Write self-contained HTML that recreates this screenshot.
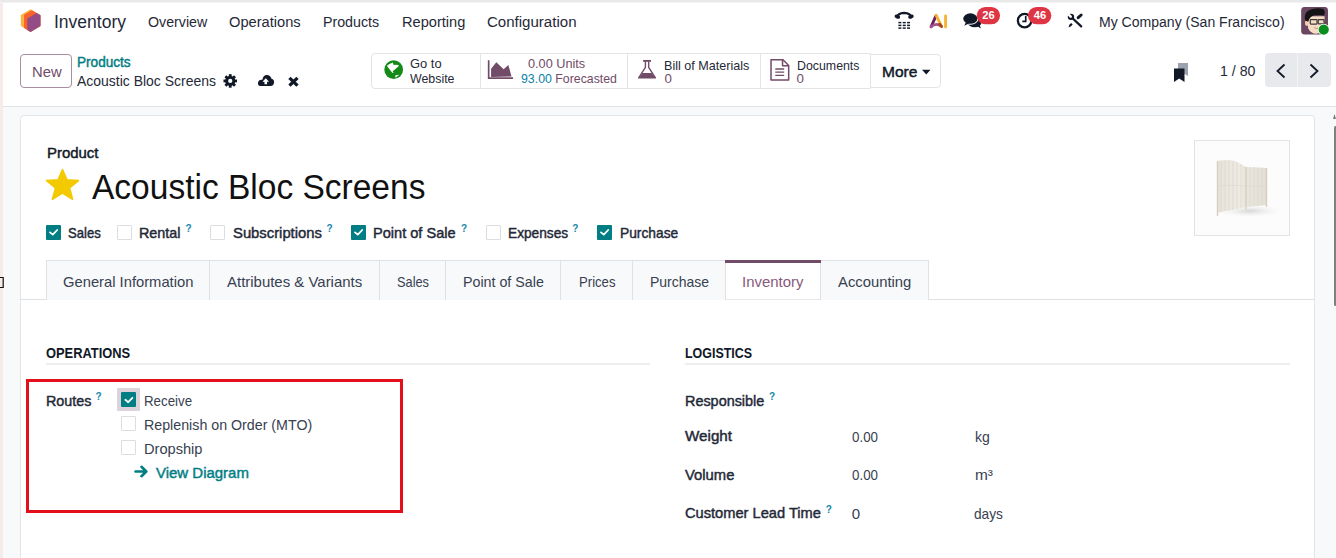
<!DOCTYPE html><html><head><meta charset="utf-8"><style>
html,body{margin:0;padding:0;}
body{width:1336px;height:558px;overflow:hidden;position:relative;background:#fff;font-family:"Liberation Sans",sans-serif;}
.t{position:absolute;white-space:nowrap;transform-origin:0 0;}
</style></head><body>
<div style="position:absolute;left:0px;top:0px;width:1336px;height:2px;background:#e9e9e9"></div>
<div style="position:absolute;left:0px;top:2px;width:1336px;height:1px;background:#f3f3f3"></div>
<div style="position:absolute;left:0px;top:3px;width:3px;height:555px;background:#f5ecea"></div>
<div style="position:absolute;left:3px;top:106px;width:1333px;height:1px;background:#e3e4e6"></div>
<div style="position:absolute;left:3px;top:107px;width:1333px;height:451px;background:#f8f9fa"></div>
<div style="position:absolute;left:20px;top:115px;width:1293px;height:460px;background:#fff;border:1px solid #e3e5e8;border-radius:4px"></div>
<svg style="position:absolute;left:1332px;top:112px" width="4" height="196" viewBox="0 0 4 196"><path d="M2.5 2 L4 7 L1 7 Z" fill="#7a7a7a"/><rect x="2" y="14" width="4" height="180" rx="1.5" fill="#808080"/></svg>
<svg style="position:absolute;left:0px;top:277px" width="4" height="11" viewBox="0 0 4 11"><path d="M0 0.5 H3.2 V10.5 H0" fill="none" stroke="#111" stroke-width="1.2"/></svg>
<svg style="position:absolute;left:16px;top:5px" width="30" height="30" viewBox="0 0 558 558"><polygon points="270,80 455,190 455,390 270,500 90,390 90,185" fill="#f9b53f"/><polygon points="297,96 455,190 455,390 270,500 150,427 150,180" fill="#f9622a"/><polygon points="385,148 455,190 455,390 270,500 210,463 210,250" fill="#934c86"/></svg>
<div class="t" style="left:54.0px;top:13px;font-size:18px;line-height:18px;color:#1f2937;transform:scaleX(0.9725);">Inventory</div>
<div class="t" style="left:147.6px;top:14px;font-size:15.5px;line-height:15.5px;color:#1f2937;transform:scaleX(0.9165);">Overview</div>
<div class="t" style="left:228.8px;top:14px;font-size:15.5px;line-height:15.5px;color:#1f2937;transform:scaleX(0.9457);">Operations</div>
<div class="t" style="left:323.2px;top:14px;font-size:15.5px;line-height:15.5px;color:#1f2937;transform:scaleX(0.9171);">Products</div>
<div class="t" style="left:401.7px;top:14px;font-size:15.5px;line-height:15.5px;color:#1f2937;transform:scaleX(0.9419);">Reporting</div>
<div class="t" style="left:487.1px;top:14px;font-size:15.5px;line-height:15.5px;color:#1f2937;transform:scaleX(0.9707);">Configuration</div>
<svg style="position:absolute;left:890px;top:8px" width="65" height="26" viewBox="0 0 1336 534"><path d="M150 180 Q160 110 290 100 Q420 110 430 180" fill="none" stroke="#111827" stroke-width="48"/><ellipse cx="150" cy="178" rx="58" ry="40" fill="#111827" transform="rotate(20 150 178)"/><ellipse cx="432" cy="178" rx="58" ry="40" fill="#111827" transform="rotate(-20 432 178)"/><g fill="#111827"><rect x="172" y="285" width="62" height="30"/><rect x="262" y="285" width="62" height="30"/><rect x="350" y="285" width="62" height="30"/><rect x="172" y="342" width="62" height="30"/><rect x="262" y="342" width="62" height="30"/><rect x="350" y="342" width="62" height="30"/><rect x="172" y="398" width="62" height="30"/><rect x="262" y="398" width="62" height="30"/><rect x="350" y="398" width="62" height="30"/></g><path d="M845 385 L945 160" stroke="#6b1f5f" stroke-width="60" stroke-linecap="round" fill="none"/><path d="M845 385 Q950 290 1060 380" stroke="#a0508f" stroke-width="55" stroke-linecap="round" fill="none"/><path d="M950 150 L1060 380" stroke="#f8b133" stroke-width="60" stroke-linecap="round" fill="none"/><path d="M1020 330 L1060 380" stroke="#a8401e" stroke-width="55" stroke-linecap="round" fill="none"/><path d="M1142 160 L1142 390" stroke="#f8b133" stroke-width="58" stroke-linecap="round" fill="none"/></svg>
<svg style="position:absolute;left:955px;top:4px" width="100" height="30" viewBox="0 0 1336 401"><ellipse cx="262" cy="250" rx="90" ry="62" fill="#111827"/><path d="M290 290 L345 328 L325 265 Z" fill="#111827"/><ellipse cx="205" cy="195" rx="108" ry="83" fill="#fff"/><ellipse cx="205" cy="195" rx="95" ry="70" fill="#111827"/><path d="M150 238 L122 292 L200 255 Z" fill="#111827"/><circle cx="930" cy="222" r="90" fill="none" stroke="#111827" stroke-width="30"/><path d="M945 160 V232 H900" fill="none" stroke="#111827" stroke-width="22"/><rect x="290" y="40" width="312" height="230" rx="115" fill="#df3443"/><rect x="975" y="40" width="312" height="230" rx="115" fill="#df3443"/></svg>
<div class="t" style="left:982.3px;top:10px;font-size:11.2px;line-height:11.2px;color:#fff;font-weight:bold;">26</div>
<div class="t" style="left:1033.8px;top:10px;font-size:11.2px;line-height:11.2px;color:#fff;font-weight:bold;">46</div>
<svg style="position:absolute;left:1060px;top:8px" width="30" height="26" viewBox="0 0 644 558"><path d="M275 225 L455 395" stroke="#111827" stroke-width="48" stroke-linecap="round"/><circle cx="235" cy="190" r="68" fill="#111827"/><path d="M235 190 L160 115" stroke="#fff" stroke-width="52"/><circle cx="235" cy="190" r="22" fill="#fff"/><path d="M182 418 L200 360 L240 322 L272 352 L236 392 Z" fill="#111827"/><path d="M390 208 L455 150" stroke="#111827" stroke-width="62" stroke-linecap="round"/></svg>
<div class="t" style="left:1099.2px;top:14px;font-size:15.5px;line-height:15.5px;color:#1f2937;transform:scaleX(0.9053);">My Company (San Francisco)</div>
<svg style="position:absolute;left:1296px;top:4px" width="38" height="34" viewBox="0 0 624 558"><rect x="85" y="50" width="440" height="450" rx="55" fill="#6a4661"/><path d="M200 200 Q190 330 200 400 Q240 490 330 490 Q420 480 460 400 L470 200 Z" fill="#f7dcc4"/><ellipse cx="180" cy="310" rx="32" ry="48" fill="#f2cfb4"/><path d="M150 270 Q120 150 220 100 Q330 50 450 80 Q490 120 460 190 Q420 170 300 185 Q230 200 200 290 Z" fill="#151515"/><rect x="235" y="255" width="110" height="75" rx="8" fill="none" stroke="#3d3d3d" stroke-width="20"/><rect x="365" y="255" width="95" height="70" rx="8" fill="none" stroke="#3d3d3d" stroke-width="20"/><path d="M300 390 Q340 410 380 395" fill="none" stroke="#a86a5a" stroke-width="12"/><circle cx="455" cy="420" r="97" fill="#fff"/><circle cx="455" cy="420" r="84" fill="#0a8f1e"/></svg>
<div style="position:absolute;left:20px;top:54px;width:50px;height:32px;border:1px solid #a98ea2;border-radius:4px;background:#fff"></div>
<div class="t" style="left:31.6px;top:64px;font-size:15px;line-height:15px;color:#714b67;transform:scaleX(0.9898);">New</div>
<div class="t" style="left:77.4px;top:55px;font-size:14px;line-height:14px;color:#017e84;-webkit-text-stroke:0.45px #017e84;transform:scaleX(0.9702);">Products</div>
<div class="t" style="left:77.0px;top:73px;font-size:15px;line-height:15px;color:#1f2937;transform:scaleX(0.9314);">Acoustic Bloc Screens</div>
<svg style="position:absolute;left:218px;top:66px" width="86" height="28" viewBox="0 0 1336 435"><g transform="translate(190 232)" fill="#111827"><rect x="-22" y="-105" width="44" height="60" transform="rotate(0)"/><rect x="-22" y="-105" width="44" height="60" transform="rotate(45)"/><rect x="-22" y="-105" width="44" height="60" transform="rotate(90)"/><rect x="-22" y="-105" width="44" height="60" transform="rotate(135)"/><rect x="-22" y="-105" width="44" height="60" transform="rotate(180)"/><rect x="-22" y="-105" width="44" height="60" transform="rotate(225)"/><rect x="-22" y="-105" width="44" height="60" transform="rotate(270)"/><rect x="-22" y="-105" width="44" height="60" transform="rotate(315)"/><circle r="78"/></g><circle cx="190" cy="232" r="33" fill="#fff"/><path d="M650 310 Q610 300 625 245 Q640 205 690 215 Q700 140 760 140 Q820 145 830 200 Q880 215 870 265 Q860 310 820 310 Z" fill="#111827"/><path d="M742 190 L690 245 H722 V285 H762 V245 H794 Z" fill="#fff"/><path d="M1110 185 L1235 305 M1235 185 L1110 305" stroke="#111827" stroke-width="52"/></svg>
<div style="position:absolute;left:371px;top:53px;width:498px;height:34px;border:1px solid #e2e4e7;border-radius:4px 0 0 4px;background:#fff"></div>
<div style="position:absolute;left:870px;top:54px;width:69px;height:32px;border:1px solid #e2e4e7;border-radius:0 4px 4px 0;background:#fff"></div>
<div style="position:absolute;left:480px;top:54px;width:1px;height:34px;background:#e2e4e7"></div>
<div style="position:absolute;left:627px;top:54px;width:1px;height:34px;background:#e2e4e7"></div>
<div style="position:absolute;left:760px;top:54px;width:1px;height:34px;background:#e2e4e7"></div>
<svg style="position:absolute;left:382px;top:58px" width="24" height="24" viewBox="0 0 558 558"><circle cx="272" cy="272" r="218" fill="#168a18"/><path d="M118 172 L175 140 L250 106 L262 140 L300 158 L340 155 L395 175 L380 198 L345 228 L318 252 L296 276 L262 298 L270 340 L248 350 L215 312 L175 262 L132 212 Z" fill="#fff"/><ellipse cx="292" cy="138" rx="28" ry="20" fill="#168a18"/><ellipse cx="272" cy="312" rx="20" ry="18" fill="#168a18"/><path d="M310 400 L405 392 L312 458 Z" fill="#fff"/></svg>
<svg style="position:absolute;left:380px;top:55px" width="140" height="30" viewBox="0 0 1336 286"><path d="M1037 50 V220 H1270" fill="none" stroke="#714b67" stroke-width="16"/><path d="M1060 210 V130 L1110 70 L1180 135 L1225 95 L1255 205 Z" fill="#714b67"/></svg>
<div class="t" style="left:410.4px;top:57px;font-size:13.3px;line-height:13.3px;color:#1f2937;transform:scaleX(0.9714);">Go to</div>
<div class="t" style="left:410.4px;top:72px;font-size:13.3px;line-height:13.3px;color:#1f2937;transform:scaleX(0.9309);">Website</div>
<div class="t" style="left:527.7px;top:57px;font-size:13.3px;line-height:13.3px;color:#714b67;transform:scaleX(0.9552);">0.00 Units</div>
<div class="t" style="left:520.6px;top:72px;font-size:13.3px;line-height:13.3px;color:#714b67;transform:scaleX(0.9274);"><span style="color:#0c81a5">93.00</span> Forecasted</div>
<svg style="position:absolute;left:634px;top:56px" width="26" height="26" viewBox="0 0 558 558"><path d="M195 105 H365" stroke="#714b67" stroke-width="40"/><path d="M245 120 V245 L100 468 H460 L315 245 V120" fill="none" stroke="#714b67" stroke-width="30" stroke-linejoin="round"/><path d="M183 365 H377 L455 468 H105 Z" fill="#714b67"/></svg>
<div class="t" style="left:664.4px;top:59px;font-size:13.3px;line-height:13.3px;color:#1f2937;transform:scaleX(0.9460);">Bill of Materials</div>
<div class="t" style="left:664.4px;top:72px;font-size:13.3px;line-height:13.3px;color:#714b67;">0</div>
<svg style="position:absolute;left:766px;top:56px" width="28" height="28" viewBox="0 0 558 558"><path d="M100 75 H338 L452 188 V478 H100 Z" fill="none" stroke="#714b67" stroke-width="30" stroke-linejoin="round"/><path d="M330 75 V192 H452" fill="none" stroke="#714b67" stroke-width="30" stroke-linejoin="round"/><path d="M185 258 H362 M185 322 H362 M185 386 H362" stroke="#714b67" stroke-width="28"/></svg>
<div class="t" style="left:796.6px;top:59px;font-size:13.3px;line-height:13.3px;color:#1f2937;transform:scaleX(0.9291);">Documents</div>
<div class="t" style="left:796.6px;top:72px;font-size:13.3px;line-height:13.3px;color:#714b67;">0</div>
<div class="t" style="left:881.8px;top:64px;font-size:15px;line-height:15px;color:#111827;-webkit-text-stroke:0.45px #111827;transform:scaleX(1.0329);">More</div>
<svg style="position:absolute;left:920px;top:66px" width="12" height="10" viewBox="0 0 12 10"><path d="M2 3.8 H10.5 L6.25 8.5 Z" fill="#111827"/></svg>
<svg style="position:absolute;left:1172px;top:62px" width="18" height="22" viewBox="0 0 18 22"><path d="M6 1 H16 V14 L11 11 L6 14 Z" fill="#9ca3af"/><path d="M2 6.5 H12.5 V20 L7.2 16.5 L2 20 Z" fill="#111827"/></svg>
<div class="t" style="left:1220.0px;top:63px;font-size:15px;line-height:15px;color:#1f2937;transform:scaleX(0.9459);">1 / 80</div>
<div style="position:absolute;left:1265px;top:53px;width:66px;height:34px;background:#e7e9ec;border-radius:4px"></div>
<div style="position:absolute;left:1297px;top:53px;width:1px;height:34px;background:#f3f4f6"></div>
<svg style="position:absolute;left:1265px;top:53px" width="66" height="34" viewBox="0 0 66 34"><path d="M19.5 11.5 L12.5 18 L19.5 24.5" fill="none" stroke="#111827" stroke-width="1.8"/><path d="M45.5 11.5 L52.5 18 L45.5 24.5" fill="none" stroke="#111827" stroke-width="1.8"/></svg>
<div class="t" style="left:46.5px;top:145px;font-size:15px;line-height:15px;color:#111827;-webkit-text-stroke:0.45px #111827;transform:scaleX(0.9962);">Product</div>
<svg style="position:absolute;left:44.5px;top:168px" width="36" height="34" viewBox="0 0 36 34"><path d="M17.5 1.5 L22 11.8 L33.5 12.6 L24.6 20 L27.6 31.3 L17.5 25 L7.4 31.3 L10.4 20 L1.5 12.6 L13 11.8 Z" fill="#f3c900" stroke="#f3c900" stroke-width="1.5" stroke-linejoin="round"/></svg>
<div class="t" style="left:91.8px;top:170px;font-size:35.7px;line-height:35.7px;color:#111111;transform:scaleX(0.9390);">Acoustic Bloc Screens</div>
<div style="position:absolute;left:1194px;top:140px;width:94px;height:94px;border:1px solid #e3e3e3;background:#fdfcfc"></div>
<svg style="position:absolute;left:1195px;top:141px" width="94" height="94" viewBox="0 0 94 94"><defs><linearGradient id="sg" x1="0" x2="1"><stop offset="0" stop-color="#e6e2d8"/><stop offset="0.45" stop-color="#eeebe4"/><stop offset="0.55" stop-color="#e9e6de"/><stop offset="1" stop-color="#e3dfd5"/></linearGradient><radialGradient id="sh"><stop offset="0" stop-color="#d6d6d6"/><stop offset="1" stop-color="#fdfcfc" stop-opacity="0"/></radialGradient></defs><ellipse cx="55" cy="70" rx="36" ry="7" fill="url(#sh)"/><path d="M22 20 Q32 18 40 20 Q46 23 51 26 L72 27 L72 64 L51 66 L22 72 Z" fill="url(#sg)"/><path d="M26 20 V71 M30 19.5 V70 M34 19.5 V69.5 M38 20 V69 M42 21 V68 M46 23 V67 M55 26 V65.5 M59 26 V65 M63 26.5 V65 M67 26.5 V64.5" fill="none" stroke="#dcd7cc" stroke-width="0.7"/><path d="M22 45 Q40 44 51 45 L72 45" fill="none" stroke="#dfdad0" stroke-width="0.8"/><path d="M22.5 20 V75 M51 26 V68.5 M71.5 27 V66" fill="none" stroke="#d6cfc0" stroke-width="1.4"/></svg>
<div style="position:absolute;left:46px;top:225px;width:15px;height:15px;background:#017e84;border-radius:1px"></div>
<svg style="position:absolute;left:46px;top:225px" width="15" height="15" viewBox="0 0 15 15"><path d="M4 7.4 L6.8 9.6 L11.2 5" fill="none" stroke="#fff" stroke-width="1.8" stroke-linecap="round" stroke-linejoin="round"/></svg>
<div class="t" style="left:67.7px;top:225px;font-size:15px;line-height:15px;color:#1f2937;-webkit-text-stroke:0.45px #1f2937;transform:scaleX(0.8741);">Sales</div>
<div style="position:absolute;left:117px;top:225px;width:13px;height:13px;border:1px solid #dcdde0;border-radius:1px;background:#fff"></div>
<div class="t" style="left:139.3px;top:225px;font-size:15px;line-height:15px;color:#1f2937;-webkit-text-stroke:0.45px #1f2937;transform:scaleX(0.9571);">Rental</div>
<div class="t" style="left:185.5px;top:224px;font-size:10px;line-height:10px;color:#1587aa;font-weight:bold;">?</div>
<div style="position:absolute;left:210px;top:225px;width:13px;height:13px;border:1px solid #dcdde0;border-radius:1px;background:#fff"></div>
<div class="t" style="left:232.7px;top:225px;font-size:15px;line-height:15px;color:#1f2937;-webkit-text-stroke:0.45px #1f2937;transform:scaleX(0.9873);">Subscriptions</div>
<div class="t" style="left:326.5px;top:224px;font-size:10px;line-height:10px;color:#1587aa;font-weight:bold;">?</div>
<div style="position:absolute;left:351px;top:225px;width:15px;height:15px;background:#017e84;border-radius:1px"></div>
<svg style="position:absolute;left:351px;top:225px" width="15" height="15" viewBox="0 0 15 15"><path d="M4 7.4 L6.8 9.6 L11.2 5" fill="none" stroke="#fff" stroke-width="1.8" stroke-linecap="round" stroke-linejoin="round"/></svg>
<div class="t" style="left:373.4px;top:225px;font-size:15px;line-height:15px;color:#1f2937;-webkit-text-stroke:0.45px #1f2937;transform:scaleX(0.9711);">Point of Sale</div>
<div class="t" style="left:461.0px;top:224px;font-size:10px;line-height:10px;color:#1587aa;font-weight:bold;">?</div>
<div style="position:absolute;left:486px;top:225px;width:13px;height:13px;border:1px solid #dcdde0;border-radius:1px;background:#fff"></div>
<div class="t" style="left:508.2px;top:225px;font-size:15px;line-height:15px;color:#1f2937;-webkit-text-stroke:0.45px #1f2937;transform:scaleX(0.9139);">Expenses</div>
<div class="t" style="left:572.3px;top:224px;font-size:10px;line-height:10px;color:#1587aa;font-weight:bold;">?</div>
<div style="position:absolute;left:597px;top:225px;width:15px;height:15px;background:#017e84;border-radius:1px"></div>
<svg style="position:absolute;left:597px;top:225px" width="15" height="15" viewBox="0 0 15 15"><path d="M4 7.4 L6.8 9.6 L11.2 5" fill="none" stroke="#fff" stroke-width="1.8" stroke-linecap="round" stroke-linejoin="round"/></svg>
<div class="t" style="left:620.0px;top:225px;font-size:15px;line-height:15px;color:#1f2937;-webkit-text-stroke:0.45px #1f2937;transform:scaleX(0.9184);">Purchase</div>
<div style="position:absolute;left:20px;top:299px;width:1294px;height:1px;background:#dfe1e4"></div>
<div style="position:absolute;left:46px;top:260px;width:162px;height:39px;background:#f8f9fa;border-left:1px solid #dfe1e4;border-top:1px solid #dfe1e4;"></div>
<div class="t" style="left:63.0px;top:274px;font-size:15px;line-height:15px;color:#374151;transform:scaleX(0.9836);">General Information</div>
<div style="position:absolute;left:209px;top:260px;width:169px;height:39px;background:#f8f9fa;border-left:1px solid #dfe1e4;border-top:1px solid #dfe1e4;"></div>
<div class="t" style="left:227.3px;top:274px;font-size:15px;line-height:15px;color:#374151;transform:scaleX(0.9969);">Attributes &amp; Variants</div>
<div style="position:absolute;left:379px;top:260px;width:65px;height:39px;background:#f8f9fa;border-left:1px solid #dfe1e4;border-top:1px solid #dfe1e4;"></div>
<div class="t" style="left:396.5px;top:274px;font-size:15px;line-height:15px;color:#374151;transform:scaleX(0.8528);">Sales</div>
<div style="position:absolute;left:445px;top:260px;width:114px;height:39px;background:#f8f9fa;border-left:1px solid #dfe1e4;border-top:1px solid #dfe1e4;"></div>
<div class="t" style="left:463.2px;top:274px;font-size:15px;line-height:15px;color:#374151;transform:scaleX(0.9500);">Point of Sale</div>
<div style="position:absolute;left:560px;top:260px;width:71px;height:39px;background:#f8f9fa;border-left:1px solid #dfe1e4;border-top:1px solid #dfe1e4;"></div>
<div class="t" style="left:578.5px;top:274px;font-size:15px;line-height:15px;color:#374151;transform:scaleX(0.8758);">Prices</div>
<div style="position:absolute;left:632px;top:260px;width:92px;height:39px;background:#f8f9fa;border-left:1px solid #dfe1e4;border-top:1px solid #dfe1e4;"></div>
<div class="t" style="left:649.6px;top:274px;font-size:15px;line-height:15px;color:#374151;transform:scaleX(0.9326);">Purchase</div>
<div style="position:absolute;left:725px;top:260px;width:94px;height:39px;background:#fff;border-left:1px solid #dfe1e4;border-top:1px solid #dfe1e4;"></div>
<div class="t" style="left:742.4px;top:274px;font-size:15px;line-height:15px;color:#875a7b;transform:scaleX(0.9951);">Inventory</div>
<div style="position:absolute;left:820px;top:260px;width:107px;height:39px;background:#f8f9fa;border-left:1px solid #dfe1e4;border-top:1px solid #dfe1e4;border-right:1px solid #dfe1e4;"></div>
<div class="t" style="left:837.5px;top:274px;font-size:15px;line-height:15px;color:#374151;transform:scaleX(0.9876);">Accounting</div>
<div style="position:absolute;left:725px;top:260px;width:96px;height:3px;background:#714b67"></div>
<div style="position:absolute;left:726px;top:299px;width:94px;height:1px;background:#e6e7ea"></div>
<div class="t" style="left:45.9px;top:345px;font-size:15px;line-height:15px;color:#111827;font-weight:bold;transform:scaleX(0.8586);">OPERATIONS</div>
<div style="position:absolute;left:46px;top:363px;width:604px;height:2px;background:#eeeff1"></div>
<div class="t" style="left:685.0px;top:345px;font-size:15px;line-height:15px;color:#111827;font-weight:bold;transform:scaleX(0.8301);">LOGISTICS</div>
<div style="position:absolute;left:685px;top:363px;width:605px;height:2px;background:#eeeff1"></div>
<div style="position:absolute;left:26px;top:379px;width:377px;height:134px;box-sizing:border-box;border:3px solid #e3101c"></div>
<div class="t" style="left:45.9px;top:393px;font-size:15px;line-height:15px;color:#1f2937;-webkit-text-stroke:0.45px #1f2937;transform:scaleX(0.9552);">Routes</div>
<div class="t" style="left:95.6px;top:392px;font-size:10px;line-height:10px;color:#1587aa;font-weight:bold;">?</div>
<div style="position:absolute;left:117px;top:388px;width:23px;height:23px;background:#ddd3da;border-radius:1px"></div>
<div style="position:absolute;left:121px;top:392px;width:15px;height:15px;background:#017e84;border-radius:1px"></div>
<svg style="position:absolute;left:121px;top:392px" width="15" height="15" viewBox="0 0 15 15"><path d="M4.4 7.8 L7.2 10.2 L11.4 5.8" fill="none" stroke="#fff" stroke-width="1.8" stroke-linecap="round" stroke-linejoin="round"/></svg>
<div class="t" style="left:143.7px;top:393px;font-size:15px;line-height:15px;color:#374151;transform:scaleX(0.8876);">Receive</div>
<div style="position:absolute;left:121px;top:416px;width:13px;height:13px;border:1px solid #dcdde0;border-radius:1px;background:#fff"></div>
<div class="t" style="left:143.7px;top:417px;font-size:15px;line-height:15px;color:#374151;transform:scaleX(0.9488);">Replenish on Order (MTO)</div>
<div style="position:absolute;left:121px;top:440px;width:13px;height:13px;border:1px solid #dcdde0;border-radius:1px;background:#fff"></div>
<div class="t" style="left:143.7px;top:441px;font-size:15px;line-height:15px;color:#374151;transform:scaleX(0.9745);">Dropship</div>
<svg style="position:absolute;left:134px;top:464px" width="16" height="14" viewBox="0 0 16 14"><path d="M1.5 7.5 H12 M7.5 2.8 L12.3 7.5 L7.5 12.2" fill="none" stroke="#017e84" stroke-width="2.6" stroke-linecap="round" stroke-linejoin="round"/></svg>
<div class="t" style="left:156.0px;top:465px;font-size:15px;line-height:15px;color:#017e84;-webkit-text-stroke:0.45px #017e84;transform:scaleX(0.9979);">View Diagram</div>
<div class="t" style="left:685.4px;top:393px;font-size:15px;line-height:15px;color:#1f2937;-webkit-text-stroke:0.45px #1f2937;transform:scaleX(0.9606);">Responsible</div>
<div class="t" style="left:768.9px;top:392px;font-size:10px;line-height:10px;color:#1587aa;font-weight:bold;">?</div>
<div class="t" style="left:685.4px;top:428px;font-size:15px;line-height:15px;color:#1f2937;-webkit-text-stroke:0.45px #1f2937;transform:scaleX(1.0126);">Weight</div>
<div class="t" style="left:851.7px;top:429px;font-size:15px;line-height:15px;color:#374151;transform:scaleX(0.8906);">0.00</div>
<div class="t" style="left:974.5px;top:429px;font-size:15px;line-height:15px;color:#374151;transform:scaleX(0.9342);">kg</div>
<div class="t" style="left:685.4px;top:467px;font-size:15px;line-height:15px;color:#1f2937;-webkit-text-stroke:0.45px #1f2937;transform:scaleX(0.9874);">Volume</div>
<div class="t" style="left:851.7px;top:467px;font-size:15px;line-height:15px;color:#374151;transform:scaleX(0.8906);">0.00</div>
<div class="t" style="left:974.5px;top:467px;font-size:15px;line-height:15px;color:#374151;transform:scaleX(1.0291);">m³</div>
<div class="t" style="left:685.4px;top:505px;font-size:15px;line-height:15px;color:#1f2937;-webkit-text-stroke:0.45px #1f2937;transform:scaleX(0.9761);">Customer Lead Time</div>
<div class="t" style="left:825.8px;top:505px;font-size:10px;line-height:10px;color:#1587aa;font-weight:bold;">?</div>
<div class="t" style="left:851.7px;top:506px;font-size:15px;line-height:15px;color:#374151;">0</div>
<div class="t" style="left:973.5px;top:506px;font-size:15px;line-height:15px;color:#374151;transform:scaleX(0.9121);">days</div>
</body></html>
